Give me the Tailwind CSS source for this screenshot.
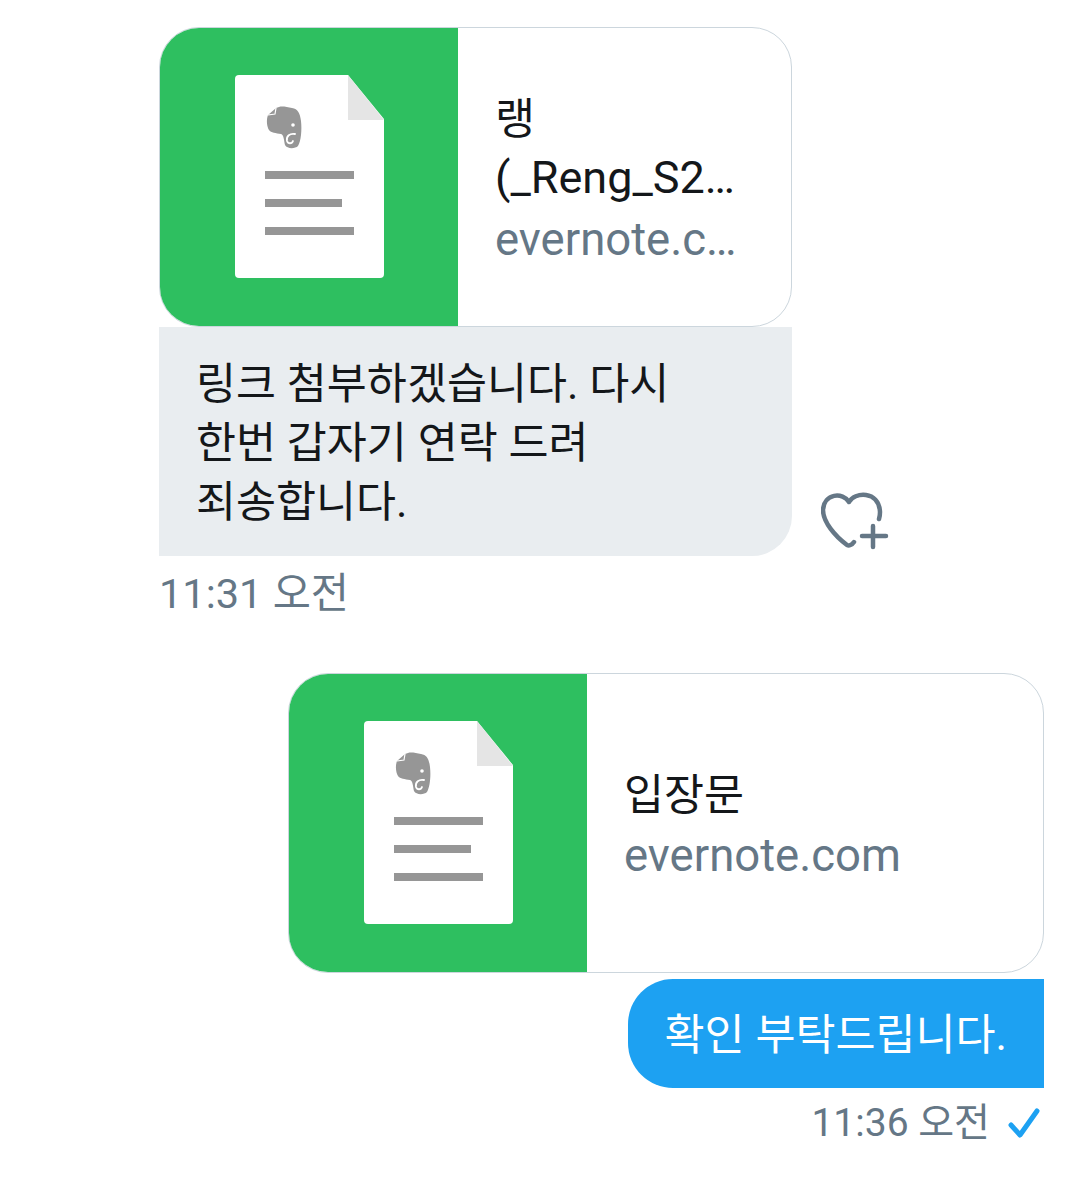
<!DOCTYPE html>
<html lang="ko">
<head>
  <meta charset="UTF-8" />
  <title>Messages</title>
  <script src="https://cdn.jsdelivr.net/npm/@tailwindcss/browser@4"></script>
</head>
<body class="bg-white">
  <svg class="hidden">
    <symbol id="note" viewBox="0 0 150 205">
      <path d="M4 0H113L149 44V199a4 4 0 0 1-4 4H4a4 4 0 0 1-4-4V4a4 4 0 0 1 4-4Z" fill="#fff"/>
      <path d="M113 0L149 45H113Z" fill="#e5e5e5"/>
      <path d="M30 96h89v8H30ZM30 124h77v8H30ZM30 152h89v8H30Z" fill="#969696"/>
      <path d="M41 33L33 40C31 45 32 52 34 55C36 58 41 58 46 59C49 60 49 66 50 70C52 74 60 74 63 71C66 66 67 55 66 46C65 38 63 34 57 33C52 32 47 31 44 32Z" fill="#969696"/>
      <path d="M33 40l7-1 1-6" fill="none" stroke="#fff" stroke-width="1.200"/>
      <path d="M60 59C55 58 51 61 52 66C53 69 57 69 58 66" fill="none" stroke="#fff" stroke-width="1.800" stroke-linecap="round"/>
      <circle cx="58" cy="50" r="1.800" fill="#fff"/>
    </symbol>
  </svg>

  <div class="w-[1079px] h-[1180px] flex flex-col pt-[27px] pl-[159px] pr-[35px] font-['Roboto','Noto_Sans_CJK_KR',sans-serif]">
    <!-- received -->
    <div class="flex items-end">
      <div class="w-[633px] flex flex-col">
        <div class="h-[300px] flex rounded-[40px] border border-[#ccd6dd] overflow-hidden">
          <div class="w-[299px] -ml-px -my-px shrink-0 bg-[#2ebf60] flex items-center justify-center">
            <svg class="w-[150px] h-[205px] ml-[2px]"><use href="#note"/></svg>
          </div>
          <div class="flex-1 min-w-0 pl-[37px] pr-[40px] pt-[6px] flex flex-col justify-center">
            <div class="text-[43.500px] leading-[60px] text-[#14171a]">랭</div>
            <div class="text-[45px] leading-[60px] -mt-[2px] text-[#14171a] whitespace-nowrap">(_Reng_S2…</div>
            <div class="text-[45.500px] leading-[60px] mt-[2px] text-[#657786] whitespace-nowrap">evernote.c…</div>
          </div>
        </div>
        <div class="h-[229px] bg-[#e9edf0] rounded-br-[40px] px-[37px] pt-[28px] text-[43.500px] leading-[59px] text-[#14171a]">
          링크 첨부하겠습니다. 다시<br>한번 갑자기 연락 드려<br>죄송합니다.
        </div>
      </div>
      <svg class="w-[68px] h-[62px] ml-[29px] mb-[4px]" viewBox="0 0 68 62" fill="none" stroke="#657786" stroke-width="4.500" stroke-linecap="round" stroke-linejoin="round">
        <path d="M28 12C22 2 3 3 2 20c0 12 12 26 24 35 2 1 5 0 7-3M28 12C33 2 58 0 59 22c0 2 0 4-1 7"/>
        <path d="M52 36v21M41 46h24"/>
      </svg>
    </div>
    <div class="mt-[11px] text-[41.500px] leading-[54px] text-[#657786]">11:31 오전</div>

    <!-- sent -->
    <div class="mt-[52px] self-end w-[756px] h-[300px] flex rounded-[40px] border border-[#ccd6dd] overflow-hidden">
      <div class="w-[299px] -ml-px -my-px shrink-0 bg-[#2ebf60] flex items-center justify-center">
        <svg class="w-[150px] h-[205px] ml-[2px]"><use href="#note"/></svg>
      </div>
      <div class="flex-1 min-w-0 pl-[37px] pt-[6px] flex flex-col justify-center leading-[60px]">
        <div class="text-[43.500px] text-[#14171a]">입장문</div>
        <div class="text-[45.500px] text-[#657786]">evernote.com</div>
      </div>
    </div>
    <div class="mt-[6px] self-end h-[109px] pl-[37px] pr-[37px] pt-[5px] flex items-center bg-[#1da1f2] rounded-l-[45px] text-[43.500px] text-white">확인 부탁드립니다.</div>
    <div class="mt-[8px] self-end flex items-center gap-[18px]">
      <span class="text-[39px] leading-[54px] text-[#657786]">11:36 오전</span>
      <svg class="w-[32px] h-[30px] mr-[4px]" viewBox="0 0 32 30" fill="none" stroke="#1da1f2" stroke-width="5" stroke-linecap="round" stroke-linejoin="round"><path d="M3 17l9 10L29 3"/></svg>
    </div>
  </div>
</body>
</html>
